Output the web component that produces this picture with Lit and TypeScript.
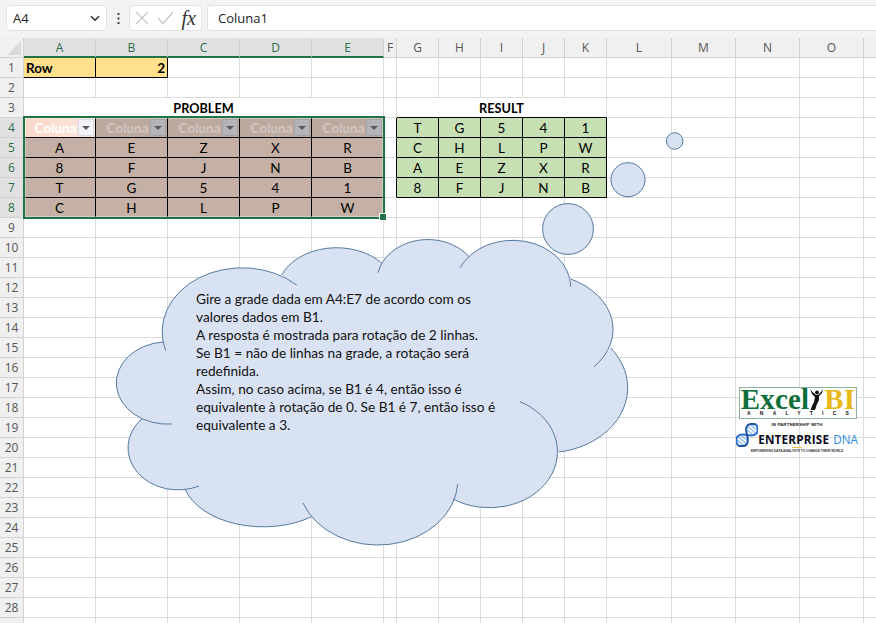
import { LitElement, html, css, svg } from "lit";
import { customElement } from "lit/decorators.js";

const COLS = ["A","B","C","D","E","F","G","H","I","J","K","L","M","N","O",""];
const PROBLEM = [["A","E","Z","X","R"],["8","F","J","N","B"],["T","G","5","4","1"],["C","H","L","P","W"]];
const RESULT = [["T","G","5","4","1"],["C","H","L","P","W"],["A","E","Z","X","R"],["8","F","J","N","B"]];
const TEXT = [
  "Gire a grade dada em A4:E7 de acordo com os",
  "valores dados em B1.",
  "A resposta é mostrada para rotação de 2 linhas.",
  "Se B1 = não de linhas na grade, a rotação será",
  "redefinida.",
  "Assim, no caso acima, se B1 é 4, então isso é",
  "equivalente à rotação de 0. Se B1 é 7, então isso é",
  "equivalente a 3.",
];
type Lobe = [number, number, number, number, number, number, number];
const LOBES: Lobe[] = [
  [165.7,350.7,80,64,0,296.7,285],
  [281.7,275,59,43,0,381.7,263],
  [378,272.7,51,42,0,469,256.7],
  [460,267.7,58,47,0,570.7,286.7],
  [570.7,279,75,56,0,594,366.7],
  [610.7,348,81,65,0,559,452],
  [520,401.7,68,56,1,453,499],
  [457.7,484,80,65,0,303,503],
  [311.7,516.7,81,51,0,185,489],
  [199,486,50,42,0,141.7,419],
  [172,424,51,41,0,163,342],
];
const arc = (l: Lobe) => `A${l[2]} ${l[3]} 0 ${l[4]} 1 ${l[5]} ${l[6]}`;
const FILL = LOBES.map((l, i) => `${i ? "L" : "M"}${l[0]} ${l[1]} ${arc(l)}`).join(" ") + " Z";
const STROKE = LOBES.map((l) => `M${l[0]} ${l[1]} ${arc(l)}`).join(" ");

@customElement("app-root")
export class AppRoot extends LitElement {
  static styles = css`
    :host { display: block; position: relative; width: 876px; height: 623px; overflow: hidden; background: #f3f3f3; font-family: "Lato", sans-serif; color: #000; }
    .bar { display: flex; align-items: flex-start; height: 38px; box-sizing: border-box; padding: 5px 0 0 6px; font-family: "Open Sans", sans-serif; }
    .box { box-sizing: border-box; height: 26px; background: #fff; border: 1px solid #e3e3e3; border-radius: 4px; display: flex; align-items: center; }
    .name { width: 101px; padding: 0 6px; justify-content: space-between; font-size: 13px; color: #222; }
    .dots { width: 22px; display: flex; justify-content: center; height: 26px; align-items: center; }
    .fxbox { width: 73px; padding: 0 3px 0 5px; justify-content: space-between; }
    .fx { font: italic 20px "Liberation Serif", serif; color: #333; padding-right: 2px; }
    .formula { flex: 1; margin-left: 5px; padding-left: 10px; font-size: 13px; color: #222; border-right: none; border-radius: 4px 0 0 4px; }
    .grid { display: grid; grid-template-columns: 24px repeat(5, 72px) 13px repeat(5, 42px) 65px repeat(4, 64px); grid-auto-rows: 20px; background: #fff; font-size: 13.5px; height: 585px; overflow: hidden; }
    .c { box-sizing: border-box; border-right: 1px solid #dcdcdc; border-bottom: 1px solid #dcdcdc; display: flex; align-items: center; justify-content: center; position: relative; white-space: nowrap; overflow: hidden; }
    .h { background: #f0f0f0; color: #555; font-family: "Open Sans", sans-serif; font-size: 12px; border-color: #d2d2d2; }
    .h.sel { background: #e1e1e1; color: #2a6f4a; }
    .h.colsel { border-bottom: 2px solid #217346; }
    .corner { background: #f0f0f0; border-color: #d2d2d2; }
    .tri { width: 0; height: 0; border-left: 14px solid transparent; border-bottom: 14px solid #dadada; position: absolute; right: 2px; bottom: 2px; }
    .span5 { grid-column: span 5; }
    .b { font-weight: 700; }
    .title { font-size: 12.7px; }
    .yellow { background: #ffe08c; border-color: #000; }
    .left { justify-content: flex-start; padding-left: 2px; }
    .right { justify-content: flex-end; padding-right: 2px; }
    .blk-r { border-right-color: #000; }
    .blk-b { border-bottom-color: #000; }
    .data { background: #c4b0a4; border-color: #000; }
    .res { background: #c6e0b4; border-color: #000; }
    .th { background: #bdaa9f; border-color: #000; color: #cfc6bf; font-weight: 700; padding-right: 0; }
    .th.active { background: linear-gradient(90deg, #f8d8ca, #fde6dc); color: #fff; }
    .btn { position: absolute; right: 1px; top: 1px; width: 16px; height: 17px; box-sizing: border-box; background: #b5b4b8; border: 1px solid #a3a2a6; display: flex; align-items: center; justify-content: center; }
    .active .btn { background: #f3f5fa; border-color: #d8dbe3; }
    .arrow { width: 0; height: 0; border-left: 4px solid transparent; border-right: 4px solid transparent; border-top: 4px solid #5c5c5c; }
    .selection { position: absolute; left: 23px; top: 116px; width: 362px; height: 103px; box-sizing: border-box; border: 2px solid #217346; box-shadow: inset 0 0 0 1px rgba(255,255,255,.35); }
    .handle { position: absolute; right: -4px; bottom: -4px; width: 6px; height: 6px; background: #217346; border: 1px solid #fff; }
    .overlay { position: absolute; left: 0; top: 0; }
    .note { position: absolute; left: 196px; top: 290px; font-size: 13.65px; line-height: 18px; white-space: nowrap; color: #111; }
    .logo { position: absolute; left: 736px; top: 387px; width: 122px; display: flex; flex-direction: column; align-items: center; }
    .lbox { box-sizing: border-box; width: 118px; height: 32px; border: 1px solid #8fb29c; background: #fff; margin-left: 2px; display: flex; flex-direction: column; align-items: center; }
    .lword { display: flex; align-items: center; font: 700 29px/22px "Liberation Serif", serif; color: #0e6f3d; height: 22px; letter-spacing: 0.2px; }
    .bi { color: #e9b91c; }
    .analytics { font: 700 5px/7px "Liberation Sans", sans-serif; letter-spacing: 9.2px; margin-left: 9px; color: #111; }
    .part { font: 700 4.4px/6px "Liberation Sans", sans-serif; margin-top: 3px; color: #222; letter-spacing: .1px; }
    .edna { display: flex; align-items: center; height: 17px; margin-top: 2px; }
    .ent { font: 700 11.7px/14px "Open Sans", sans-serif; color: #0c0c1e; letter-spacing: .2px; }
    .dna { font: 400 11.7px/14px "Open Sans", sans-serif; color: #2f8ce6; margin-left: 4px; }
    .helix { margin-top: -8px; }
    .dash { width: 10px; height: 1px; background: #e6c34a; }
    .tag { font: 700 3.2px/6px "Liberation Sans", sans-serif; color: #333; }
  `;

  private colHeaders() {
    return html`<div class="c corner"><div class="tri"></div></div>
      ${COLS.map((c, i) => html`<div class="c h ${i < 5 ? "sel colsel" : ""}">${c}</div>`)}`;
  }

  private blanks(n: number) {
    return Array.from({ length: n }, () => html`<div class="c"></div>`);
  }

  private rowHead(r: number) {
    const sel = r >= 4 && r <= 8;
    return html`<div class="c h ${sel ? "sel" : ""}">${r < 29 ? r : ""}</div>`;
  }

  private row(r: number) {
    const tail = () => this.blanks(5);
    if (r === 1) {
      return html`${this.rowHead(r)}<div class="c yellow left b">Row</div><div class="c yellow right b">2</div>${this.blanks(9)}${tail()}`;
    }
    if (r === 3) {
      return html`${this.rowHead(r)}<div class="c span5 b title blk-b">PROBLEM</div><div class="c"></div><div class="c span5 b title blk-b">RESULT</div>${tail()}`;
    }
    if (r === 4) {
      return html`${this.rowHead(r)}
        ${[0, 1, 2, 3, 4].map((i) => html`<div class="c th ${i === 0 ? "active" : ""}">Coluna1<span class="btn"><span class="arrow"></span></span></div>`)}
        <div class="c blk-r"></div>
        ${RESULT[0].map((v) => html`<div class="c res">${v}</div>`)}${tail()}`;
    }
    if (r >= 5 && r <= 8) {
      const res = r <= 7 ? RESULT[r - 4] : null;
      return html`${this.rowHead(r)}
        ${PROBLEM[r - 5].map((v) => html`<div class="c data">${v}</div>`)}
        <div class="c ${res ? "blk-r" : ""}"></div>
        ${res ? res.map((v) => html`<div class="c res">${v}</div>`) : this.blanks(5)}${tail()}`;
    }
    return html`${this.rowHead(r)}${this.blanks(16)}`;
  }

  render() {
    const rows = Array.from({ length: 29 }, (_, i) => i + 1);
    return html`
      <div class="bar">
        <div class="box name"><span>A4</span>
          <svg width="10" height="7" viewBox="0 0 10 7"><path d="M1 1.2 5 5.2 9 1.2" fill="none" stroke="#333" stroke-width="1.6"/></svg>
        </div>
        <div class="dots"><svg width="3" height="11" viewBox="0 0 3 11"><g fill="#444"><rect x=".5" width="2" height="2"/><rect x=".5" y="4.5" width="2" height="2"/><rect x=".5" y="9" width="2" height="2"/></g></svg></div>
        <div class="box fxbox">
          <svg width="14" height="14" viewBox="0 0 14 14"><path d="M1 1 13 13M13 1 1 13" stroke="#c4c4c4" stroke-width="1.2" fill="none"/></svg>
          <svg width="17" height="14" viewBox="0 0 17 14"><path d="M1 7 6 12.5 16 1" stroke="#c4c4c4" stroke-width="1.2" fill="none"/></svg>
          <span class="fx">fx</span>
        </div>
        <div class="box formula">Coluna1</div>
      </div>
      <div class="grid">
        ${this.colHeaders()}
        ${rows.map((r) => this.row(r))}
      </div>
      <div class="selection"><div class="handle"></div></div>
      <svg class="overlay" width="876" height="623" viewBox="0 0 876 623">
        ${svg`<path d=${FILL} fill="#d9e2f3"/>
        <path d=${STROKE} fill="none" stroke="#557a9f" stroke-width="1"/>
        <circle cx="568" cy="229" r="25.4" fill="#d9e2f3" stroke="#557a9f"/>
        <circle cx="628" cy="179.7" r="17" fill="#d9e2f3" stroke="#557a9f"/>
        <circle cx="674.7" cy="141" r="8.3" fill="#d9e2f3" stroke="#557a9f"/>`}
      </svg>
      <div class="note">${TEXT.map((t) => html`<div>${t}</div>`)}</div>
      <div class="logo">
        <div class="lbox">
          <div class="lword"><span>Excel</span>
            <svg width="15" height="21" viewBox="0 0 15 21"><path d="M1 0 3 5 6 8 5 13 3 17 1.500 21 6 21 8 15 10 11 10 7 13 4 14 0 12 3 9 6 7 6 3.500 3Z" fill="#111"/><circle cx="8" cy="3.500" r="1.900" fill="#111"/></svg>
            <span class="bi">BI</span></div>
          <div class="analytics">ANALYTICS</div>
        </div>
        <div class="part">IN PARTNERSHIP WITH</div>
        <div class="edna">
          <svg class="helix" width="22" height="24" viewBox="-11 -12 22 24"><g transform="rotate(-48)" fill="none"><path d="M-14 0C-10 -8 -5 -8 0 0S10 8 14 0" stroke="#2f6fd0" stroke-width="2"/><path d="M-14 0C-10 8 -5 8 0 0S10 -8 14 0" stroke="#1b4fa8" stroke-width="2"/><path d="M-10 -4V4M-7 -5.500V5.500M-4 -4V4M4 -4V4M7 -5.500V5.500M10 -4V4" stroke="#6aaef0" stroke-width="1"/></g></svg>
          <span class="ent">ENTERPRISE</span><span class="dna">DNA</span>
        </div>
        <div class="dash"></div>
        <div class="tag">EMPOWERING DATA ANALYSTS TO CHANGE THEIR WORLD</div>
      </div>
    `;
  }
}
